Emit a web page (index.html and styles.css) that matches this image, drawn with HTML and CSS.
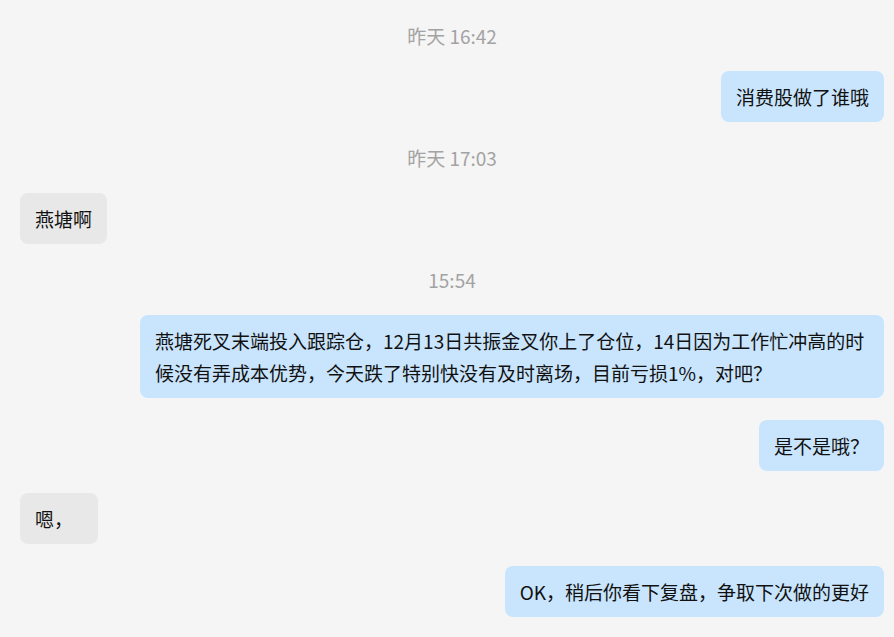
FILE: index.html
```html
<!DOCTYPE html>
<html lang="zh-CN">

<head>
    <meta charset="UTF-8">
    <meta name="viewport" content="width=device-width, initial-scale=1.0">
    <title>聊天记录</title>
    <link rel="stylesheet" href="styles.css">
</head>

<body>

    <div class="chat">
        <div class="time">昨天 16:42</div>
        <div class="msg msg-self">消费股做了谁哦</div>

        <div class="time">昨天 17:03</div>
        <div class="msg msg-other">燕塘啊</div>

        <div class="time">15:54</div>
        <div class="msg msg-self">燕塘死叉末端投入跟踪仓，12月13日共振金叉你上了仓位，14日因为工作忙冲高的时候没有弄成本优势，今天跌了特别快没有及时离场，目前亏损1%，对吧？</div>
        <div class="msg msg-self">是不是哦？</div>
        <div class="msg msg-other">嗯，&ensp;</div>
        <div class="msg msg-self">OK，稍后你看下复盘，争取下次做的更好</div>
    </div>

</body>

</html>
```

FILE: styles.css
```css
body {
    margin: 0;
    background-color: #f5f5f5;
    font-family: "Noto Sans CJK SC", "Noto Sans", sans-serif;
    color: #111;
}

.chat {
    display: flex;
    flex-direction: column;
    gap: 22px;
    padding: 22px 10px 20px 20px;
}

.time {
    text-align: center;
    font-size: 19px;
    line-height: 27px;
    color: #a3a3a3;
}

.msg {
    max-width: 744px;
    box-sizing: border-box;
    padding: 10px 15px 9px;
    font-size: 19px;
    line-height: 32px;
    border-radius: 8px;
    white-space: pre-wrap;
}

.msg-self {
    align-self: flex-end;
    background-color: #c9e5fd;
}

.msg-other {
    align-self: flex-start;
    background-color: #e8e8e8;
}
```
